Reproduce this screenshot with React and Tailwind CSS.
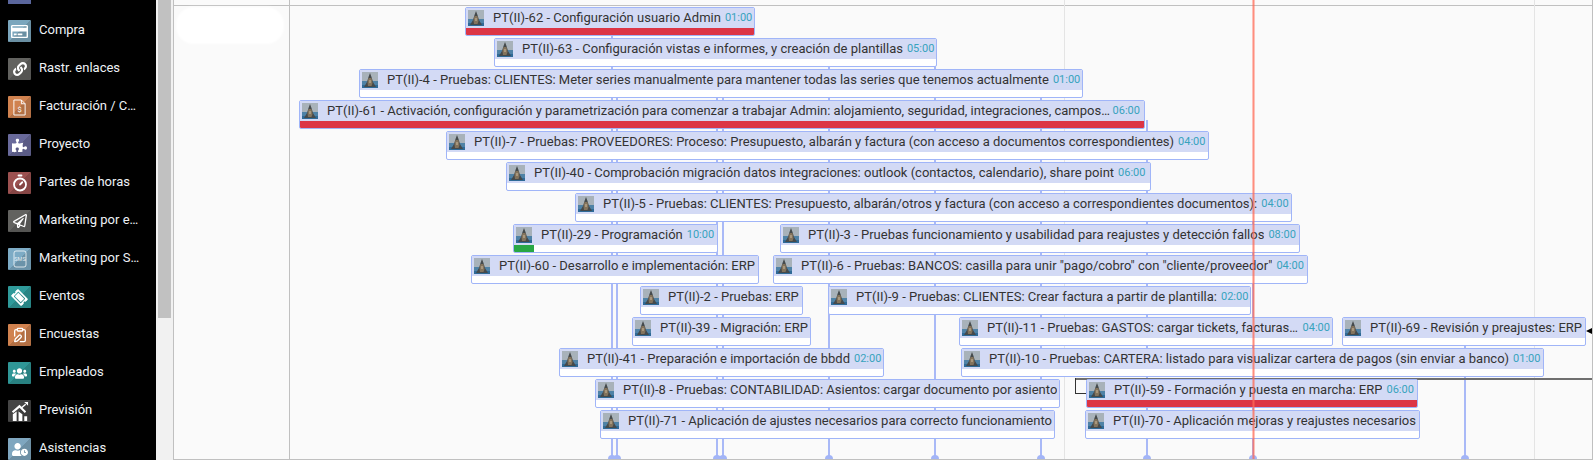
import {
  FaRegCreditCard,
  FaLink,
  FaPuzzlePiece,
  FaRegPaperPlane,
  FaTicketAlt,
  FaUsers,
  FaUserClock,
} from "react-icons/fa";
import { Timer, ClipboardPen } from "lucide-react";

const CHART_LEFT = 174;

function InvoiceGlyph() {
  return (
    <svg viewBox="0 0 16 18" className="h-[17px] w-[15px]" fill="none" stroke="white" strokeWidth="1">
      <path d="M2 1h8l4 4v12H2z" />
      <path d="M10 1v4h4" />
      <text x="8" y="14" fontSize="8" fill="white" stroke="none" textAnchor="middle" fontFamily="Roboto, sans-serif">$</text>
    </svg>
  );
}

function SmsGlyph() {
  return (
    <svg viewBox="0 0 18 18" className="h-[18px] w-[18px]" fill="none" stroke="white" strokeOpacity="0.75" strokeWidth="1">
      <rect x="3" y="1" width="12" height="16" rx="2" />
      <text x="9" y="11" fontSize="5.5" fill="white" fillOpacity="0.85" stroke="none" textAnchor="middle" fontFamily="Roboto, sans-serif">SMS</text>
    </svg>
  );
}

function ForecastGlyph() {
  return (
    <svg viewBox="0 0 22 22" className="h-[21px] w-[21px]" fill="white">
      <path d="M3 11 11 4l7 7-1.500 1.500L11 7l-6.500 5.500z" />
      <path d="M12 7l5-4 1 1-5 4z" />
      <path d="M16 1h4v4z" />
      <path d="M4 14l4-3v10H4zM10 11l4 3v7h-4z" />
      <path d="M16 16h3v5h-3z" />
    </svg>
  );
}

const menu = [
  { label: "Compra", bg: "bg-[#7ba6bd]", icon: <FaRegCreditCard className="h-[17px] w-[17px] text-white" /> },
  { label: "Rastr. enlaces", bg: "bg-[#62625f]", icon: <FaLink className="h-[14px] w-[14px] text-white" /> },
  { label: "Facturación / Contabilidad", bg: "bg-[#d0824f]", icon: <InvoiceGlyph /> },
  { label: "Proyecto", bg: "bg-[#696a9b]", icon: <FaPuzzlePiece className="h-[15px] w-[15px] text-white" /> },
  { label: "Partes de horas", bg: "bg-[#9c5150]", icon: <Timer className="h-[18px] w-[18px] text-white" strokeWidth={2.4} /> },
  { label: "Marketing por email", bg: "bg-[#62625f]", icon: <FaRegPaperPlane className="h-[14px] w-[14px] text-white" /> },
  { label: "Marketing por SMS", bg: "bg-[#7dabc5]", icon: <SmsGlyph /> },
  { label: "Eventos", bg: "bg-[#2f9a9a]", icon: <FaTicketAlt className="h-[15px] w-[15px] rotate-45 text-white" /> },
  { label: "Encuestas", bg: "bg-[#d0824f]", icon: <ClipboardPen className="h-[16px] w-[16px] text-white" /> },
  { label: "Empleados", bg: "bg-[#2f9696]", icon: <FaUsers className="h-[15px] w-[15px] text-white" /> },
  { label: "Previsión", bg: "bg-[#454545]", icon: <ForecastGlyph /> },
  { label: "Asistencias", bg: "bg-[#7fa6bf]", icon: <FaUserClock className="h-[15px] w-[16px] text-white" /> },
];

// from / to are page pixels, the row decides the height
const rows = [
  [{ id: "62", text: "Configuración usuario Admin", time: "01:00", from: 465, to: 755, progress: "red" }],
  [{ id: "63", text: "Configuración vistas e informes, y creación de plantillas", time: "05:00", from: 494, to: 937 }],
  [{ id: "4", text: "Pruebas: CLIENTES: Meter series manualmente para mantener todas las series que tenemos actualmente", time: "01:00", from: 359, to: 1083 }],
  [{ id: "61", text: "Activación, configuración y parametrización para comenzar a trabajar Admin: alojamiento, seguridad, integraciones, campos personalizados", time: "06:00", timeGap: "ml-px mr-[4px]", from: 299, to: 1145, progress: "red" }],
  [{ id: "7", text: "Pruebas: PROVEEDORES: Proceso: Presupuesto, albarán y factura (con acceso a documentos correspondientes)", time: "04:00", from: 446, to: 1209 }],
  [{ id: "40", text: "Comprobación migración datos integraciones: outlook (contactos, calendario), share point", time: "06:00", from: 506, to: 1151 }],
  [{ id: "5", text: "Pruebas: CLIENTES: Presupuesto, albarán/otros y factura (con acceso a correspondientes documentos):", time: "04:00", from: 575, to: 1292 }],
  [
    { id: "29", text: "Programación", time: "10:00", from: 513, to: 718, progress: "green" },
    { id: "3", text: "Pruebas funcionamiento y usabilidad para reajustes y detección fallos", time: "08:00", from: 780, to: 1300 },
  ],
  [
    { id: "60", text: "Desarrollo e implementación: ERP", from: 471, to: 759 },
    { id: "6", text: 'Pruebas: BANCOS: casilla para unir "pago/cobro" con "cliente/proveedor"', time: "04:00", from: 773, to: 1308 },
  ],
  [
    { id: "2", text: "Pruebas: ERP", from: 640, to: 803 },
    { id: "9", text: "Pruebas: CLIENTES: Crear factura a partir de plantilla:", time: "02:00", from: 828, to: 1251 },
  ],
  [
    { id: "39", text: "Migración: ERP", from: 632, to: 811 },
    { id: "11", text: "Pruebas: GASTOS: cargar tickets, facturas de proveedor", time: "04:00", timeGap: "ml-[4px] mr-[2px]", from: 959, to: 1333 },
    { id: "69", text: "Revisión y preajustes: ERP", from: 1342, to: 1586 },
  ],
  [
    { id: "41", text: "Preparación e importación de bbdd", time: "02:00", from: 559, to: 884 },
    { id: "10", text: "Pruebas: CARTERA: listado para visualizar cartera de pagos (sin enviar a banco)", time: "01:00", from: 961, to: 1544 },
  ],
  [
    { id: "8", text: "Pruebas: CONTABILIDAD: Asientos: cargar documento por asiento", from: 595, to: 1060 },
    { id: "59", text: "Formación y puesta en marcha: ERP", time: "06:00", from: 1086, to: 1418, progress: "red" },
  ],
  [
    { id: "71", text: "Aplicación de ajustes necesarios para correcto funcionamiento", from: 600, to: 1055 },
    { id: "70", text: "Aplicación mejoras y reajustes necesarios", from: 1085, to: 1420 },
  ],
];

const links = [
  { x: 611, top: 36 },
  { x: 616, top: 70 },
  { x: 716, top: 70 },
  { x: 722, top: 70 },
  { x: 828, top: 60 },
  { x: 934, top: 60 },
  { x: 1040, top: 70 },
  { x: 1146, top: 120 },
  { x: 1252, top: 200 },
  { x: 1464, top: 345 },
];

function Avatar() {
  return (
    <svg viewBox="0 0 16 16" className="h-4 w-4 shrink-0">
      <rect width="16" height="16" fill="#a8b2ba" />
      <rect y="9" width="16" height="7" fill="#4f82a6" />
      <rect y="13" width="16" height="3" fill="#2f6a97" />
      <path d="M2 15 5 10l1.500-5L8 1l1.500 4 1.500 5 3 5z" fill="#454a4c" />
      <path d="M6.500 6h3l1 5-1 3H6l-.5-4z" fill="#83735c" />
      <path d="M7 8h2v3H7z" fill="#a8977e" />
    </svg>
  );
}

function TaskBar({ task }) {
  return (
    <div
      className="absolute top-0 flex h-[29px] flex-col overflow-hidden rounded-[2px] border border-[#a0b5f8] bg-white"
      style={{ left: task.from - CHART_LEFT, width: task.to - task.from }}
    >
      <div className="flex h-[20px] shrink-0 items-center bg-[#d3daf5] pl-[2px]">
        <Avatar />
        <span className="ml-[9px] truncate text-[13px] leading-[20px] text-[#333333]">
          PT(II)-{task.id} - {task.text}
        </span>
        {task.time && (
          <span className={`shrink-0 text-[11px] leading-[20px] text-[#38a3bd] ${task.timeGap || "ml-[4px]"}`}>{task.time}</span>
        )}
      </div>
      {task.progress === "red" && <div className="h-[7px] w-full bg-[#dc3545]" />}
      {task.progress === "green" && <div className="h-[7px] w-[20px] bg-[#28a745]" />}
    </div>
  );
}

export default function App() {
  return (
    <div className="flex h-[460px] w-[1593px] overflow-hidden font-['Roboto',sans-serif]">
      <aside className="flex w-[156px] shrink-0 flex-col gap-[16px] bg-black pl-[8px] -mt-[18px] pb-[18px] overflow-hidden">
        <div className="h-[22px] w-[23px] shrink-0 bg-[#5a669c]" />
        {menu.map((item) => (
          <div key={item.label} className="flex h-[22px] shrink-0 items-center">
            <div className={`relative flex h-[22px] w-[23px] shrink-0 items-center justify-center overflow-hidden rounded-[1px] ${item.bg}`}>
              <div className="absolute inset-0 bg-[linear-gradient(135deg,transparent_50%,rgba(0,0,0,0.14)_50%)]" />
              <div className="relative flex items-center justify-center">{item.icon}</div>
            </div>
            <span className="mb-[2px] ml-[8px] w-[102px] truncate text-[13px] leading-[20px] text-[#eef2f6]">{item.label}</span>
          </div>
        ))}
      </aside>

      <div className="w-[17px] shrink-0 bg-[#f1f1f1] pl-[2px] pr-[2px]">
        <div className="h-[318px] w-[13px] bg-[#c1c1c1]" />
      </div>

      <main className="relative flex min-w-0 flex-1 flex-col overflow-hidden border-r border-b border-l border-[#c0c0c0] bg-[#fafafa]">
        <div className="h-[6px] shrink-0 border-b border-[#c0c0c0]" />

        <div className="absolute top-0 bottom-0 left-[115px] w-px bg-[#c0c0c0]" />
        <div className="absolute top-0 bottom-0 left-[890px] w-px bg-[#e4e4e4]" />
        <div className="absolute top-0 bottom-0 left-[1360px] w-px bg-[#e4e4e4]" />

        <div className="absolute top-[7px] left-[2px] h-[37px] w-[108px] rounded-[18px] bg-white blur-[1px]" />

        {links.map((link) => (
          <div key={link.x} className="absolute bottom-[-4px]" style={{ left: link.x - CHART_LEFT, top: link.top }}>
            <div className="h-full w-[2px] bg-[#a9b9f7]" />
            <div className="absolute bottom-0 left-[-3px] h-2 w-2 rounded-full bg-[#a3b5f7]" />
          </div>
        ))}

        <div className="absolute top-[378px] left-[901px] right-0 h-[2px] bg-[#6f6f6f]" />
        <div className="absolute top-[378px] left-[901px] h-[16px] w-[13px] border-b border-l border-[#333333]" />
        <div className="absolute top-[328px] right-0 h-0 w-0 border-y-[3px] border-r-[6px] border-y-transparent border-r-black" />

        <div className="relative flex flex-col gap-[2px] pt-[1px]">
          {rows.map((row, i) => (
            <div key={i} className="relative h-[29px]">
              {row.map((task) => (
                <TaskBar key={task.id} task={task} />
              ))}
            </div>
          ))}
        </div>

        <div className="absolute top-0 bottom-0 left-[1078px] w-[3px] bg-[#ff6a55]/40">
          <div className="ml-px h-full w-px bg-[#ff6a55]/60" />
        </div>
      </main>
    </div>
  );
}
